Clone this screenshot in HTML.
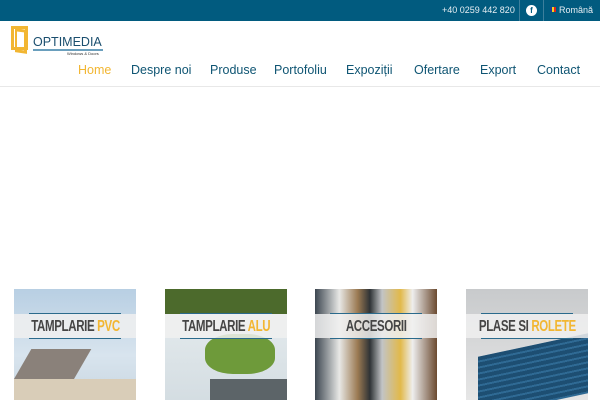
<!DOCTYPE html>
<html><head><meta charset="utf-8"><style>
*{margin:0;padding:0;box-sizing:border-box}
body{width:600px;height:400px;overflow:hidden;background:#fff;font-family:"Liberation Sans","DejaVu Sans",sans-serif;position:relative}
.top{position:absolute;left:0;top:0;width:600px;height:21px;background:#015b7f}
.top span{position:absolute;top:5px;color:#e6eef3;font-size:9px}
.sep{position:absolute;top:0;width:1px;height:21px;background:#3d7f9c}
.fb{position:absolute;left:526px;top:5px;width:11px;height:11px;border-radius:50%;background:#fff;color:#015b7f;font-size:8px;font-weight:bold;text-align:center;line-height:12px}
.flag{position:absolute;left:550px;top:7px;width:6px;height:5px;background:linear-gradient(90deg,#1c3c9c 33%,#f7d21c 33% 66%,#d22 66%)}
.logo{position:absolute;left:11px;top:26px;width:17px;height:24px;border:3px solid #f2b632}
.logo2{position:absolute;left:15px;top:29px;width:12px;height:24px;border:3px solid #f2b632;border-left-width:2px;transform:skewY(8deg)}
.ltxt{position:absolute;left:33px;top:35px;font-size:12.5px;color:#1a4e6e}
.lline{position:absolute;left:33px;top:49px;width:70px;height:2px;background:#6a9fbd}
.lsub{position:absolute;left:67px;top:51px;font-size:4px;color:#333}
.nav{position:absolute;top:63px;font-size:12.5px;color:#0f5573}
.hr{position:absolute;left:0;top:86px;width:600px;height:1px;background:#e8e8e8}
.tile{position:absolute;top:289px;width:122px;height:111px;overflow:hidden}
.band{position:absolute;left:0;top:25px;width:122px;height:24px;background:rgba(240,240,240,.85);text-align:center}
.band:before,.band:after{content:"";position:absolute;left:15px;right:15px;height:1px;background:#2a6a8c}
.band:before{top:-1px}.band:after{bottom:-1px}
.band b{display:inline-block;white-space:nowrap;font-family:"Liberation Sans",sans-serif;font-size:16px;line-height:25px;color:#454545;letter-spacing:-0.5px;transform:scaleX(.72);margin:0 -40px}
.band i{font-style:normal;color:#f2b632}
</style></head><body>
<div class="top">
<span style="left:442px">+40 0259 442 820</span>
<div class="sep" style="left:519px"></div>
<div class="fb">f</div>
<div class="sep" style="left:543px"></div>
<div class="flag"></div>
<span style="left:559px">Română</span>
</div>
<div class="logo"></div><div class="logo2"></div>
<div class="ltxt">OPTIMEDIA</div><div class="lline"></div><div class="lsub">Windows &amp; Doors</div>
<div class="nav" style="left:78px;color:#f2b632">Home</div>
<div class="nav" style="left:131px">Despre noi</div>
<div class="nav" style="left:210px">Produse</div>
<div class="nav" style="left:274px">Portofoliu</div>
<div class="nav" style="left:346px">Expoziții</div>
<div class="nav" style="left:414px">Ofertare</div>
<div class="nav" style="left:480px">Export</div>
<div class="nav" style="left:537px">Contact</div>
<div class="hr"></div>

<div class="tile" style="left:14px;background:linear-gradient(#b8cfe3,#d8e4ee 60%,#c9d6e0)">
<div style="position:absolute;left:0;top:60px;width:60px;height:60px;background:#8a817a;transform:skewX(-30deg)"></div>
<div style="position:absolute;left:0;top:90px;width:122px;height:30px;background:#d9cdb8"></div>
<div class="band"><b>TAMPLARIE <i>PVC</i></b></div></div>

<div class="tile" style="left:165px;background:linear-gradient(#e8eef0,#d4dde2)">
<div style="position:absolute;left:0;top:0;width:122px;height:25px;background:#4c6a2c"></div>
<div style="position:absolute;left:40px;top:45px;width:70px;height:40px;background:#6e9a3a;border-radius:40%"></div>
<div style="position:absolute;left:45px;top:90px;width:77px;height:21px;background:#5c6468"></div>
<div class="band"><b>TAMPLARIE <i>ALU</i></b></div></div>

<div class="tile" style="left:315px;background:linear-gradient(90deg,#3c4650,#e8e8e6 20%,#9b7a52 35%,#2f3336 45%,#c2c4c6 55%,#e2b94a 70%,#eeeeee 80%,#6b4a30)">
<div class="band"><b>ACCESORII</b></div></div>

<div class="tile" style="left:466px;background:linear-gradient(#c8cacc,#e6e6e6)">
<div style="position:absolute;left:12px;top:56px;width:110px;height:60px;background:repeating-linear-gradient(#1d4e72 0 4px,#2f6a94 4px 6px);transform:skewY(-12deg)"></div>
<div class="band"><b>PLASE SI <i>ROLETE</i></b></div></div>
</body></html>
